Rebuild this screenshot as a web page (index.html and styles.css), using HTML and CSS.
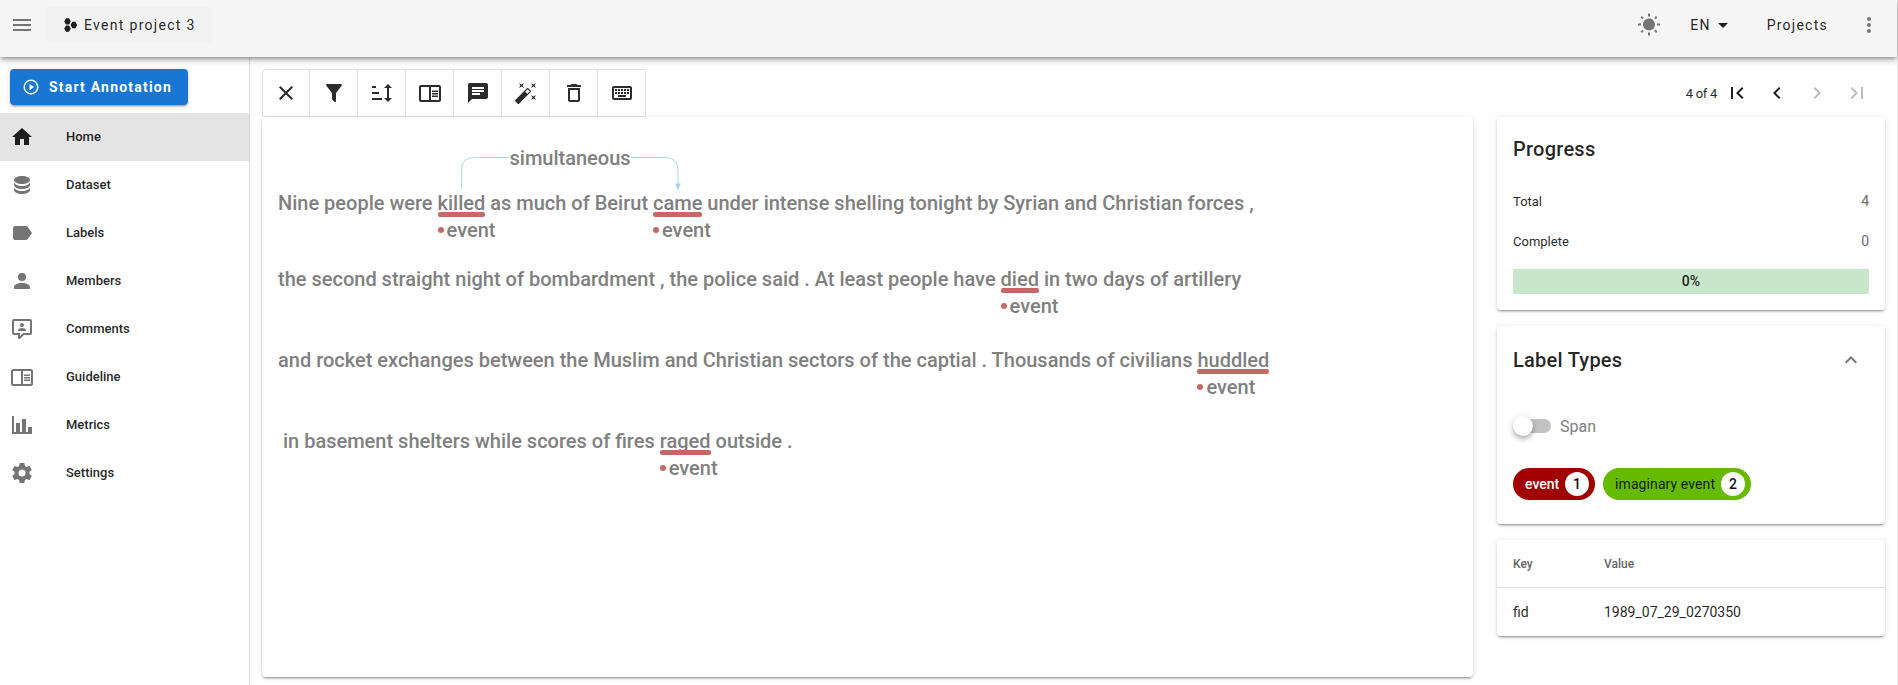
FILE: index.html
```html
<!DOCTYPE html>
<html lang="en">
<head>
<meta charset="utf-8">
<title>Event project 3</title>
<link rel="stylesheet" href="styles.css">
</head>
<body>
<div class="app">
<header class="appbar">
  <svg class="icon muted" viewBox="0 0 24 24"><path d="M3,6H21V8H3V6M3,11H21V13H3V11M3,16H21V18H3V16Z"/></svg>
  <a class="project"><svg class="logo" viewBox="0 0 14 14"><path d="M2 0.2h3L6.8 3.4 5 6.6H2L0.2 3.4ZM2 7.4h3L6.8 10.6 5 13.8H2L0.2 10.6ZM8.4 3.8h3L13.2 7l-1.8 3.2h-3L6.6 7Z"/></svg><span>Event project 3</span></a>
  <div class="spacer"></div>
  <svg class="icon muted" viewBox="0 0 24 24"><path d="M3.55,18.54L4.96,19.95L6.76,18.16L5.34,16.74M11,22.45C11.32,22.45 13,22.45 13,22.45V19.5H11M12,5.5A6,6 0 0,0 6,11.5A6,6 0 0,0 12,17.5A6,6 0 0,0 18,11.5C18,8.18 15.31,5.5 12,5.5M20,12.5H23V10.5H20M17.24,18.16L19.04,19.95L20.45,18.54L18.66,16.74M20.45,4.46L19.04,3.05L17.24,4.84L18.66,6.26M13,0.55H11V3.5H13M4,10.5H1V12.5H4M6.76,4.84L4.96,3.05L3.55,4.46L5.34,6.26L6.76,4.84Z"/></svg>
  <div class="lang"><span>EN</span><svg class="icon" viewBox="0 0 24 24"><path d="M7,10L12,15L17,10H7Z"/></svg></div>
  <span class="projects">Projects</span>
  <svg class="icon muted" viewBox="0 0 24 24"><circle cx="12" cy="6" r="2"/><circle cx="12" cy="12" r="2"/><circle cx="12" cy="18" r="2"/></svg>
</header>
<div class="body">
<nav class="sidebar">
  <button class="start"><svg viewBox="0 0 24 24"><path d="M12,20C7.59,20 4,16.41 4,12C4,7.59 7.59,4 12,4C16.41,4 20,7.59 20,12C20,16.41 16.41,20 12,20M12,2A10,10 0 0,0 2,12A10,10 0 0,0 12,22A10,10 0 0,0 22,12A10,10 0 0,0 12,2M10,16.5L16,12L10,7.5V16.5Z"/></svg><span>Start Annotation</span></button>
  <a class="item active"><svg class="icon" viewBox="0 0 24 24"><path d="M10,20V14H14V20H19V12H22L12,3L2,12H5V20H10Z"/></svg><span>Home</span></a>
  <a class="item"><svg class="icon" viewBox="0 0 24 24"><path d="M12,3C7.58,3 4,4.79 4,7C4,9.21 7.58,11 12,11C16.42,11 20,9.21 20,7C20,4.79 16.42,3 12,3M4,9V12C4,14.21 7.58,16 12,16C16.42,16 20,14.21 20,12V9C20,11.21 16.42,13 12,13C7.58,13 4,11.21 4,9M4,14V17C4,19.21 7.58,21 12,21C16.42,21 20,19.21 20,17V14C20,16.21 16.42,18 12,18C7.58,18 4,16.21 4,14Z"/></svg><span>Dataset</span></a>
  <a class="item"><svg class="icon" viewBox="0 0 24 24"><path d="M17.63,5.84C17.27,5.33 16.67,5 16,5H5A2,2 0 0,0 3,7V17A2,2 0 0,0 5,19H16C16.67,19 17.27,18.66 17.63,18.15L22,12L17.63,5.84Z"/></svg><span>Labels</span></a>
  <a class="item"><svg class="icon" viewBox="0 0 24 24"><path d="M12,4A4,4 0 0,1 16,8A4,4 0 0,1 12,12A4,4 0 0,1 8,8A4,4 0 0,1 12,4M12,14C16.42,14 20,15.79 20,18V20H4V18C4,15.79 7.58,14 12,14Z"/></svg><span>Members</span></a>
  <a class="item"><svg class="icon" viewBox="0 0 24 24"><path d="M9,22A1,1 0 0,1 8,21V18H4A2,2 0 0,1 2,16V4C2,2.89 2.9,2 4,2H20A2,2 0 0,1 22,4V16A2,2 0 0,1 20,18H13.9L10.2,21.71C10,21.9 9.75,22 9.5,22V22H9M10,16V19.08L13.08,16H20V4H4V16H10M16,14H8V13C8,11.67 10.67,11 12,11C13.33,11 16,11.67 16,13V14M12,6A2,2 0 0,1 14,8A2,2 0 0,1 12,10A2,2 0 0,1 10,8A2,2 0 0,1 12,6Z"/></svg><span>Comments</span></a>
  <a class="item"><svg class="icon" viewBox="0 0 24 24"><path d="M21,4H3A2,2 0 0,0 1,6V19A2,2 0 0,0 3,21H21A2,2 0 0,0 23,19V6A2,2 0 0,0 21,4M3,19V6H11V19H3M21,19H13V6H21V19M14,9.5H20V11H14V9.5M14,12H20V13.5H14V12M14,14.5H20V16H14V14.5Z" fill-rule="evenodd"/></svg><span>Guideline</span></a>
  <a class="item"><svg class="icon" viewBox="0 0 24 24"><path d="M22,21H2V3H4V19H6V10H10V19H12V6H16V19H18V14H22V21Z"/></svg><span>Metrics</span></a>
  <a class="item"><svg class="icon" viewBox="0 0 24 24"><path d="M12,15.5A3.5,3.5 0 0,1 8.5,12A3.5,3.5 0 0,1 12,8.5A3.5,3.5 0 0,1 15.5,12A3.5,3.5 0 0,1 12,15.5M19.43,12.97C19.47,12.65 19.5,12.33 19.5,12C19.5,11.67 19.47,11.34 19.43,11L21.54,9.37C21.73,9.22 21.78,8.95 21.66,8.73L19.66,5.27C19.54,5.05 19.27,4.96 19.05,5.05L16.56,6.05C16.04,5.66 15.5,5.32 14.87,5.07L14.5,2.42C14.46,2.18 14.25,2 14,2H10C9.75,2 9.54,2.18 9.5,2.42L9.13,5.07C8.5,5.32 7.96,5.66 7.44,6.05L4.95,5.05C4.73,4.96 4.46,5.05 4.34,5.27L2.34,8.73C2.21,8.95 2.27,9.22 2.46,9.37L4.57,11C4.53,11.34 4.5,11.67 4.5,12C4.5,12.33 4.53,12.65 4.57,12.97L2.46,14.63C2.27,14.78 2.21,15.05 2.34,15.27L4.34,18.73C4.46,18.95 4.73,19.03 4.95,18.95L7.44,17.94C7.96,18.34 8.5,18.68 9.13,18.93L9.5,21.58C9.54,21.82 9.75,22 10,22H14C14.25,22 14.46,21.82 14.5,21.58L14.87,18.93C15.5,18.67 16.04,18.34 16.56,17.94L19.05,18.95C19.27,19.03 19.54,18.95 19.66,18.73L21.66,15.27C21.78,15.05 21.73,14.78 21.54,14.63L19.43,12.97Z"/></svg><span>Settings</span></a>
</nav>
<main class="main">
  <section class="work">
    <div class="toolbar">
      <button><svg class="icon" viewBox="0 0 24 24"><path d="M19,6.41L17.59,5L12,10.59L6.41,5L5,6.41L10.59,12L5,17.59L6.41,19L12,13.41L17.59,19L19,17.59L13.41,12L19,6.41Z"/></svg></button>
      <button><svg class="icon" viewBox="0 0 24 24"><path d="M14,12V19.88C14.04,20.18 13.94,20.5 13.71,20.71C13.32,21.1 12.69,21.1 12.3,20.71L10.29,18.7C10.06,18.47 9.96,18.16 10,17.87V12H9.97L4.21,4.62C3.87,4.19 3.95,3.56 4.38,3.22C4.57,3.08 4.78,3 5,3V3H19V3C19.22,3 19.43,3.08 19.62,3.22C20.05,3.56 20.13,4.19 19.79,4.62L14.03,12H14Z"/></svg></button>
      <button><svg class="icon" viewBox="0 0 24 24"><path d="M19 17H22L18 21L14 17H17V7H14L18 3L22 7H19V17M2 17H12V19H2M6 5V7H2V5M2 11H9V13H2V11Z"/></svg></button>
      <button><svg class="icon" viewBox="0 0 24 24"><path d="M21,4H3A2,2 0 0,0 1,6V19A2,2 0 0,0 3,21H21A2,2 0 0,0 23,19V6A2,2 0 0,0 21,4M3,19V6H11V19H3M21,19H13V6H21V19M14,9.5H20V11H14V9.5M14,12H20V13.5H14V12M14,14.5H20V16H14V14.5Z" fill-rule="evenodd"/></svg></button>
      <button><svg class="icon" viewBox="0 0 24 24"><path d="M20,2H4A2,2 0 0,0 2,4V22L6,18H20A2,2 0 0,0 22,16V4A2,2 0 0,0 20,2M6,9H18V11H6M14,14H6V12H14M18,8H6V6H18"/></svg></button>
      <button><svg class="icon" viewBox="0 0 24 24"><path d="M7.5,5.6L5,7L6.4,4.5L5,2L7.5,3.4L10,2L8.6,4.5L10,7L7.5,5.6M19.5,15.4L22,14L20.6,16.5L22,19L19.5,17.6L17,19L18.4,16.5L17,14L19.5,15.4M22,2L20.6,4.5L22,7L19.5,5.6L17,7L18.4,4.5L17,2L19.5,3.4L22,2M13.34,12.78L15.78,10.34L13.66,8.22L11.22,10.66L13.34,12.78M14.37,7.29L16.71,9.63C17.1,10 17.1,10.65 16.71,11.04L5.04,22.71C4.65,23.1 4,23.1 3.63,22.71L1.29,20.37C0.9,20 0.9,19.35 1.29,18.96L12.96,7.29C13.35,6.9 14,6.9 14.37,7.29Z"/></svg></button>
      <button><svg class="icon" viewBox="0 0 24 24"><path d="M6,19A2,2 0 0,0 8,21H16A2,2 0 0,0 18,19V7H6V19M8,9H16V19H8V9M15.5,4L14.5,3H9.5L8.5,4H5V6H19V4H15.5Z"/></svg></button>
      <button><svg class="icon" viewBox="0 0 24 24"><path d="M4,5A2,2 0 0,0 2,7V17A2,2 0 0,0 4,19H20A2,2 0 0,0 22,17V7A2,2 0 0,0 20,5H4M4,7H20V17H4V7M5,8V10H7V8H5M8,8V10H10V8H8M11,8V10H13V8H11M14,8V10H16V8H14M17,8V10H19V8H17M5,11V13H7V11H5M8,11V13H10V11H8M11,11V13H13V11H11M14,11V13H16V11H14M17,11V13H19V11H17M8,14V16H16V14H8Z"/></svg></button>
    </div>
    <article class="card document">
      <svg class="relation" viewBox="0 0 230 60"><path class="arc" d="M5.5 49V30.500Q5.5 17.500 18.500 17.500H53M175 17.500H209Q222 17.500 222 30.500V44"/><path class="head" d="M219.200 43.500h5.600l-2.800 7Z"/><text x="53.500" y="25">simultaneous</text></svg>
      <p class="line first">Nine people were <span class="entity">killed<span class="tag">event</span></span> as much of Beirut <span class="entity">came<span class="tag">event</span></span> under intense shelling tonight by Syrian and Christian forces ,</p>
      <p class="line">the second straight night of bombardment , the police said . At least people have <span class="entity">died<span class="tag">event</span></span> in two days of artillery</p>
      <p class="line">and rocket exchanges between the Muslim and Christian sectors of the captial . Thousands of civilians <span class="entity">huddled<span class="tag">event</span></span></p>
      <p class="line">&nbsp;in basement shelters while scores of fires <span class="entity">raged<span class="tag">event</span></span> outside .</p>
    </article>
  </section>
  <aside class="side">
    <div class="pager"><span>4 of 4</span>
      <svg class="icon" viewBox="0 0 24 24"><path d="M18.41,16.59L13.82,12L18.41,7.41L17,6L11,12L17,18L18.41,16.59M6,6H8V18H6V6Z"/></svg>
      <svg class="icon" viewBox="0 0 24 24"><path d="M15.41,16.58L10.83,12L15.41,7.41L14,6L8,12L14,18L15.41,16.58Z"/></svg>
      <svg class="icon off" viewBox="0 0 24 24"><path d="M8.59,16.58L13.17,12L8.59,7.41L10,6L16,12L10,18L8.59,16.58Z"/></svg>
      <svg class="icon off" viewBox="0 0 24 24"><path d="M5.59,7.41L10.18,12L5.59,16.59L7,18L13,12L7,6L5.59,7.41M16,6H18V18H16V6Z"/></svg>
    </div>
    <section class="card progress">
      <h2>Progress</h2>
      <div class="stat"><span>Total</span><span class="num">4</span></div>
      <div class="stat"><span>Complete</span><span class="num">0</span></div>
      <div class="bar">0%</div>
    </section>
    <section class="card labels">
      <div class="labels-head"><h2>Label Types</h2><svg class="icon muted" viewBox="0 0 24 24"><path d="M7.41,15.41L12,10.83L16.59,15.41L18,14L12,8L6,14L7.41,15.41Z"/></svg></div>
      <div class="switch"><span class="track"><span class="thumb"></span></span><span>Span</span></div>
      <div class="chips"><span class="chip red">event<b>1</b></span><span class="chip green">imaginary event<b>2</b></span></div>
    </section>
    <section class="card meta">
      <div class="row head"><span>Key</span><span>Value</span></div>
      <div class="row"><span>fid</span><span>1989_07_29_0270350</span></div>
    </section>
  </aside>
</main>
</div>
</div>
</body>
</html>
```
FILE: styles.css
```css
* { box-sizing: border-box; }
body { margin: 0; background: #fefefe; color: rgba(0,0,0,.87); font-family: Roboto, sans-serif; font-size: 14px; overflow: hidden; }
.app { display: flex; flex-direction: column; height: 685px; border-right: 1px solid #e8e8e8; }
h2, p { margin: 0; }
button { font: inherit; }
.icon { width: 24px; height: 24px; fill: currentColor; flex: none; display: block; }
.muted { color: #757575; }
.appbar { height: 57px; flex: none; display: flex; align-items: center; padding: 0 16px 7px 10px; background: #f5f5f5; box-shadow: 0 2px 4px -1px rgba(0,0,0,.3), 0 4px 5px rgba(0,0,0,.14), 0 1px 10px rgba(0,0,0,.12); z-index: 2; letter-spacing: 1.25px; }
.project { display: flex; align-items: center; gap: 6px; margin-left: 12px; padding-left: 18px; width: 165px; height: 36px; border-radius: 4px; background: #f1f1f1; letter-spacing: 1.3px; }
.logo { width: 14px; height: 14px; fill: #1e1e1e; }
.spacer { flex: 1; }
.lang { display: flex; align-items: center; margin-left: 29px; }
.lang .icon { margin-left: 0; }
.projects { margin: 0 29px 0 32px; }
.body { flex: 1; display: flex; min-height: 0; }
.sidebar { width: 250px; flex: none; border-right: 1px solid #dcdcdc; padding-top: 12px; }
.start { display: flex; align-items: center; gap: 9px; width: 178px; height: 36px; margin: 0 0 8px 10px; padding: 0 0 0 12px; border: 0; border-radius: 4px; background: #1976d2; color: #fff; font-weight: 700; letter-spacing: 1.2px; white-space: nowrap; box-shadow: 0 3px 1px -2px rgba(0,0,0,.2), 0 2px 2px rgba(0,0,0,.14), 0 1px 5px rgba(0,0,0,.12); }
.start svg { width: 18px; height: 18px; fill: #fff; }
.item { display: flex; align-items: center; gap: 32px; height: 48px; padding-left: 10px; font-size: 13px; font-weight: 500; }
.item .icon { color: #757575; }
.item span { padding-bottom: 1px; }
.active { background: #e4e4e4; }
.active .icon { color: #1e1e1e; }
.main { flex: 1; display: flex; gap: 24px; padding: 12px 12px 0; }
.work { width: 1211px; flex: none; }
.toolbar { display: flex; width: 384px; height: 48px; border: 1px solid #e2e2e2; border-radius: 4px 0 0 0; background: #fff; }
.toolbar button { width: 48px; flex: none; padding: 0 0 0 12px; border: 0; border-right: 1px solid #e2e2e2; background: none; color: #2c2c2c; }
.toolbar button:first-child { width: 47px; padding-left: 11px; }
.toolbar button:last-child { border: 0; width: 47px; }
.card { background: #fff; border-radius: 4px; box-shadow: 0 3px 1px -2px rgba(0,0,0,.2), 0 2px 2px rgba(0,0,0,.14), 0 1px 5px rgba(0,0,0,.12); }
.document { position: relative; height: 560px; padding: 74px 16px 0; color: #808080; font-size: 20px; font-weight: 500; }
.line { height: 81px; line-height: 24px; white-space: pre; }
.line.first { height: 76px; }
.entity { position: relative; }
.entity::after { content: ""; position: absolute; left: 0; right: 0; top: 21px; height: 5px; border-radius: 2px; background: #c66865; }
.tag { position: absolute; left: 9px; top: 27px; line-height: 24px; }
.tag::before { content: ""; position: absolute; left: -9px; top: 9px; width: 6px; height: 6px; border-radius: 50%; background: #c66865; }
.relation { position: absolute; left: 194px; top: 23px; width: 230px; height: 60px; }
.arc { fill: none; stroke: #add8e6; stroke-width: 1; }
.head { fill: #a9d3e8; }
.relation text { font-size: 20px; fill: #808080; }
.side { width: 388px; flex: none; }
.pager { display: flex; align-items: center; justify-content: flex-end; gap: 16px; height: 48px; padding-right: 16px; font-size: 13px; }
.pager span { margin-right: -8px; letter-spacing: -.3px; }
.off { color: #bdbdbd; }
h2 { font-size: 20px; font-weight: 500; letter-spacing: .25px; line-height: 32px; }
.progress { height: 193px; padding: 16px; margin-bottom: 16px; }
.stat { display: flex; justify-content: space-between; align-items: center; height: 40px; font-size: 13px; }
.progress h2 { margin-bottom: 16px; }
.num { color: #6b6b6b; font-size: 14px; }
.bar { height: 25px; margin-top: 8px; background: #c8e6c9; text-align: center; line-height: 25px; font-weight: 500; }
.labels { height: 198px; padding: 18px 16px 0; margin-bottom: 16px; }
.labels-head { display: flex; justify-content: space-between; align-items: center; padding-right: 6px; }
.switch { display: flex; align-items: center; gap: 9px; height: 24px; margin-top: 38px; font-size: 16px; color: #808080; }
.track { position: relative; width: 34px; height: 14px; margin-left: 4px; border-radius: 7px; background: #c2c2c2; }
.thumb { position: absolute; left: -4px; top: -3px; width: 20px; height: 20px; border-radius: 50%; background: #fff; box-shadow: 0 2px 4px -1px rgba(0,0,0,.2), 0 4px 5px rgba(0,0,0,.14), 0 1px 10px rgba(0,0,0,.12); }
.chips { display: flex; gap: 8px; margin-top: 30px; }
.chip { display: flex; align-items: center; justify-content: space-between; height: 32px; padding: 0 6px 0 12px; border-radius: 16px; }
.chip b { width: 24px; height: 24px; border-radius: 50%; background: #fff; color: #111; text-align: center; line-height: 24px; font-weight: 500; }
.red { width: 82px; background: #a00000; color: #fff; font-weight: 500; }
.green { width: 148px; background: #66bb00; letter-spacing: .1px; }
.row { display: flex; height: 48px; align-items: center; padding-left: 16px; }
.row span:first-child { width: 91px; }
.row.head { border-bottom: 1px solid #dedede; color: #666; font-size: 12px; font-weight: 500; }
```
